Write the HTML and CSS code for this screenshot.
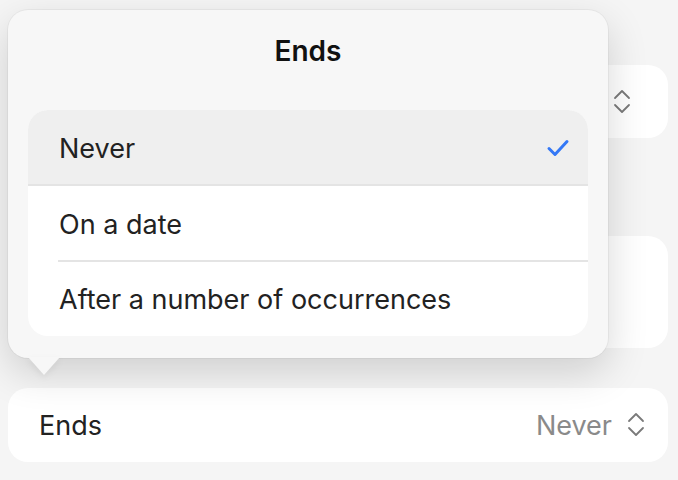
FILE: index.html
```html
<!DOCTYPE html>
<html>
<head>
<meta charset="utf-8">
<link rel="stylesheet" href="styles.css">
</head>
<body>
<div class="page">
  <div class="card card-a">
    <span class="spacer"></span>
    <svg class="updown" width="20" height="30" viewBox="0 0 20 30"><path d="M3 11 L10 4 L17 11 M3 18 L10 25 L17 18" fill="none" stroke="#7a7a7a" stroke-width="1.8" stroke-linecap="round" stroke-linejoin="round"/></svg>
  </div>
  <div class="card card-b"></div>
  <div class="card card-c">
    <span class="label">Ends</span>
    <span class="value">Never</span>
    <svg class="updown" width="20" height="30" viewBox="0 0 20 30"><path d="M3 11 L10 4 L17 11 M3 18 L10 25 L17 18" fill="none" stroke="#7a7a7a" stroke-width="1.8" stroke-linecap="round" stroke-linejoin="round"/></svg>
  </div>
</div>
<div class="popover">
  <div class="title">Ends</div>
  <div class="list">
    <div class="row selected">
      <span>Never</span>
      <svg class="check" width="24" height="20" viewBox="0 0 24 20"><path d="M3 10.5 L9 16.5 L21 3.5" fill="none" stroke="#3478f6" stroke-width="3" stroke-linecap="round" stroke-linejoin="round"/></svg>
    </div>
    <div class="row"><span>On a date</span></div>
    <div class="row last"><span>After a number of occurrences</span></div>
  </div>
  <div class="arrow"></div>
</div>
</body>
</html>
```
FILE: styles.css
```css
html, body {
  margin: 0;
  padding: 0;
}
body {
  width: 678px;
  height: 480px;
  background: #f5f5f5;
  font-family: Inter, "Noto Sans", sans-serif;
  color: #222;
  overflow: hidden;
  position: relative;
}
.page {
  padding: 65px 10px 0 8px;
  display: flex;
  flex-direction: column;
}
.card {
  background: #fff;
  border-radius: 20px;
  display: flex;
  align-items: center;
  padding: 0 22px 0 31px;
}
.card-a {
  height: 73px;
}
.card-b {
  height: 112px;
  margin-top: 98px;
}
.card-c {
  height: 74px;
  margin-top: 40px;
}
.spacer { flex: 1; }
.label {
  font-size: 27px;
  flex: 1;
}
.value {
  font-size: 27px;
  color: #8a8a8a;
  margin-right: 14px;
}
.card-a .updown { margin-right: 14px; }
.popover {
  position: absolute;
  left: 8px;
  top: 10px;
  width: 600px;
  height: 348px;
  background: #f7f7f7;
  border-radius: 20px;
  box-shadow: 0 0 0 1px rgba(0,0,0,0.04), 0 14px 40px rgba(0,0,0,0.16);
  box-sizing: border-box;
  padding: 0 20px;
}
.title {
  height: 82px;
  margin-bottom: 18px;
  display: flex;
  align-items: center;
  justify-content: center;
  font-size: 28px;
  font-weight: 600;
  color: #111;
}
.list {
  background: #fff;
  border-radius: 20px;
  overflow: hidden;
}
.row {
  height: 76px;
  display: flex;
  align-items: center;
  justify-content: space-between;
  padding: 0 18px 0 31px;
  font-size: 27px;
  position: relative;
}
.row::after {
  content: "";
  position: absolute;
  left: 30px;
  right: 0;
  bottom: 0;
  height: 2px;
  background: #e4e4e4;
}
.row.selected {
  background: #efefef;
}
.row.selected::after { left: 0; }
.row.last { height: 74px; }
.row.last::after { display: none; }
.arrow {
  position: absolute;
  left: 20px;
  top: 347px;
  width: 0;
  height: 0;
  border-left: 16px solid transparent;
  border-right: 16px solid transparent;
  border-top: 18px solid #f7f7f7;
  filter: drop-shadow(0 3px 3px rgba(0,0,0,0.06));
}
```
